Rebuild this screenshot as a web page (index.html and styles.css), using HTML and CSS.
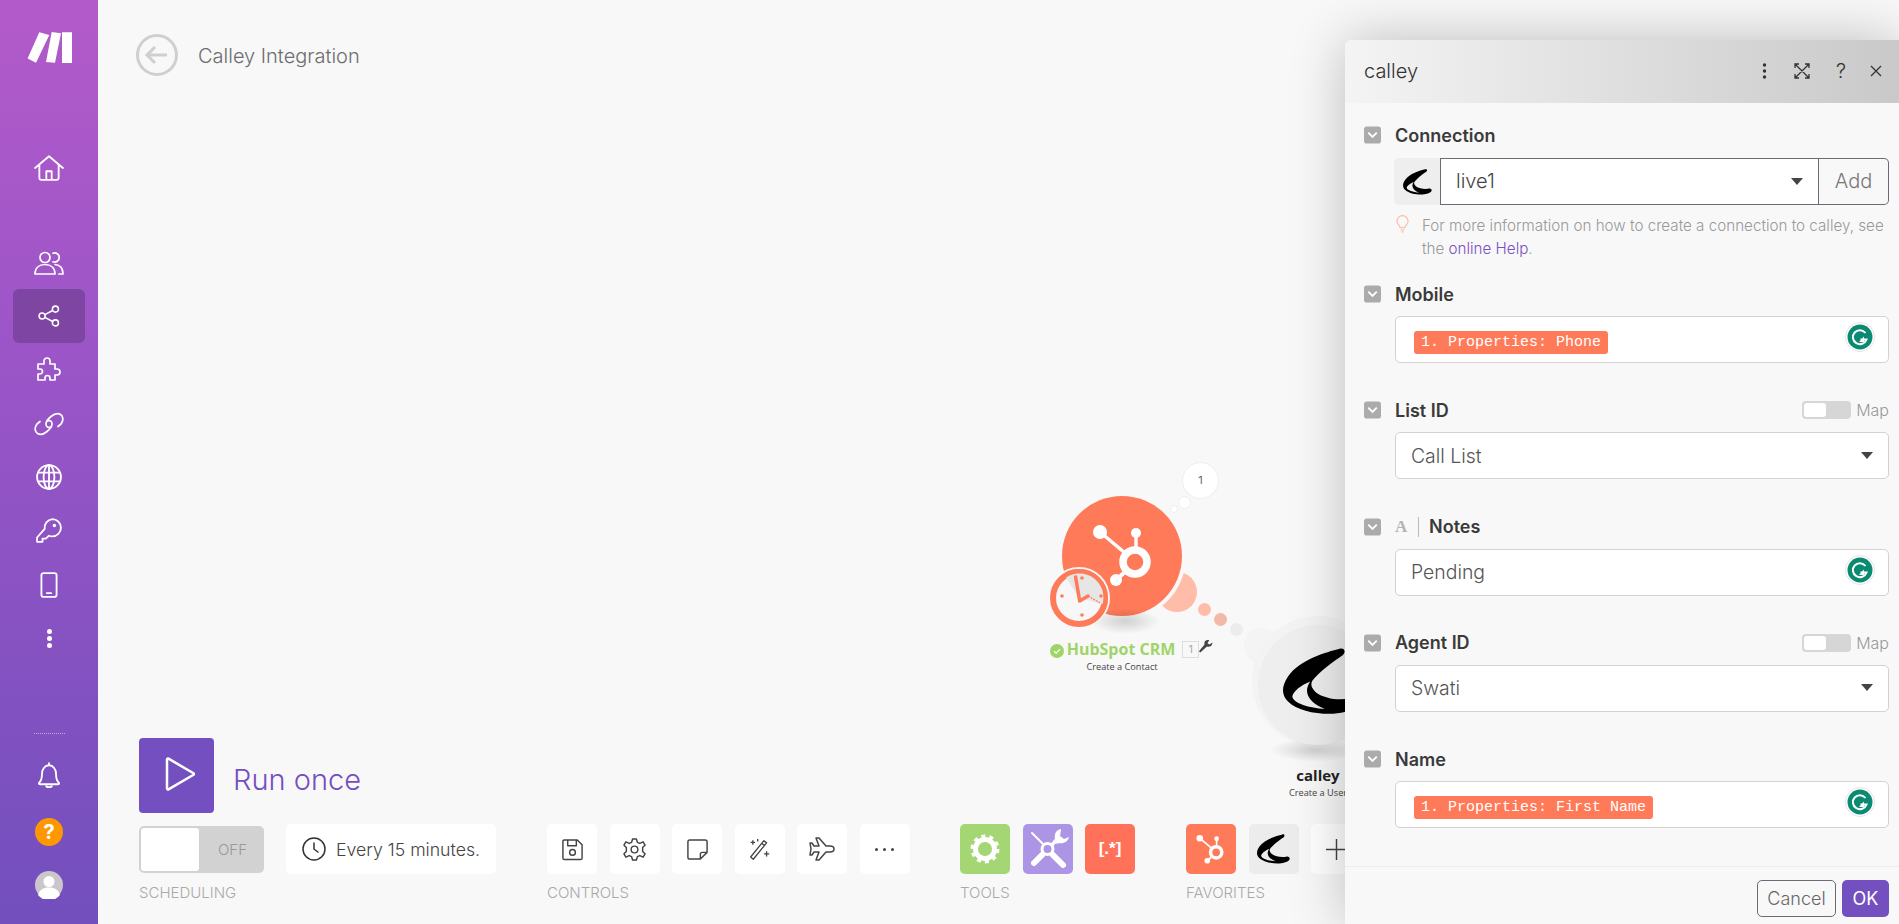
FILE: index.html
```html
<!DOCTYPE html>
<html lang="en">
  <head>
    <meta charset="UTF-8" />
    <title>Calley Integration</title>
    <link rel="stylesheet" href="styles.css">
  </head>
  <body>
    <svg class="defs">
      <defs>
        <symbol id="calley" viewBox="0 0 222 200">
          <path fill-rule="evenodd" fill="#000" d="M170 2C130 12 50 35 15 85C-5 115-5 140 15 160C40 185 90 197 140 197C170 197 205 190 218 172C224 160 215 148 202 150C170 158 125 152 98 132C85 120 82 108 88 98C110 70 150 40 178 22C190 12 185-2 170 2ZM82 100C55 110 30 130 28 145C30 165 80 180 125 182C95 172 72 150 72 128C72 118 76 108 82 100Z"/>
        </symbol>
        <symbol id="grammarly" viewBox="0 0 30 30">
          <circle cx="15" cy="15" r="14.5" fill="#fff" stroke="#e4e4e4"/>
          <circle cx="15" cy="15" r="12.5" fill="#0b8a72"/>
          <path d="M20.5 11a7 7 0 1 0 1 6.500h-6" fill="none" stroke="#fff" stroke-width="2"/>
          <path d="M19 14.500v5.500h-5z" fill="#fff"/>
        </symbol>
        <symbol id="check" viewBox="0 0 18 18">
          <rect width="18" height="18" rx="3" fill="#ababab"/>
          <path d="M4.500 6.500L9 11l4.500-4.500" fill="none" stroke="#fff" stroke-width="2"/>
        </symbol>
        <symbol id="hub" viewBox="0 0 64 64">
          <g fill="none" stroke="currentColor">
            <circle cx="43" cy="39" r="12" stroke-width="7.500"/>
            <path d="M8 9L33 30" stroke-width="3.500"/>
            <path d="M44 10V26" stroke-width="3.500"/>
            <path d="M34 48L24 57" stroke-width="4"/>
          </g>
          <g fill="currentColor">
            <circle cx="8" cy="9" r="7"/>
            <circle cx="44" cy="10" r="5"/>
            <circle cx="24" cy="57" r="6"/>
          </g>
        </symbol>
      </defs>
    </svg>

    <div class="app">
      <nav class="sidebar">
        <svg class="logo" viewBox="0 0 45 31"><path d="M.6 26.500L12.300.3 22.300 3 9 30.700zM19 30L24.700 0 34 1.300 28 30.700zM35 .3h10V31H35z" fill="#fff"/></svg>
        <a class="nav_item nav_home"><svg viewBox="0 0 28 24"><path d="M1 12L14 1l13 11M5 9v12a2 2 0 0 0 2 2h14a2 2 0 0 0 2-2V9M11.500 23v-8h5v8"/></svg></a>
        <a class="nav_item nav_first"><svg viewBox="0 0 30 24"><circle cx="11" cy="6.500" r="5"/><path d="M19 2.200a4.600 4.600 0 1 1 0 8.600M1 23c0-6 4-9.500 10-9.500S21 17 21 23zM21 13.500c5 .5 8 4 8 9.500h-4"/></svg></a>
        <a class="nav_item nav_active"><svg viewBox="0 0 24 24"><circle cx="4.500" cy="12" r="3.300"/><circle cx="19" cy="4.500" r="3.300"/><circle cx="19" cy="19.500" r="3.300"/><path d="M7.500 10.500l8.500-4.500M7.500 13.500l8.500 4.500"/></svg></a>
        <a class="nav_item"><svg viewBox="0 0 26 26"><path d="M2 7h6V4a3 3 0 0 1 6 0v3h5v5h2a3 3 0 0 1 0 6h-2v5h-5v-2a2.500 2.500 0 0 0-5 0v2H2v-6h2a2.500 2.500 0 0 0 0-5H2z"/></svg></a>
        <a class="nav_item"><svg viewBox="0 0 30 24"><path d="M13 9c3-1 5 0 5 3s-2 5-5 7.500-7 3.500-9.500 2S0 16 3 12l3-2.500"/><path d="M17 15c-3 1-5 0-5-3s2-5 5-7.500 7-3.500 9.500-2 3.500 5.500.5 9.500l-3 2.500"/></svg></a>
        <a class="nav_item"><svg viewBox="0 0 24 24"><circle cx="12" cy="12" r="11"/><ellipse cx="12" cy="12" rx="5" ry="11"/><path d="M2 8h20M2 16h20M12 1v22"/></svg></a>
        <a class="nav_item"><svg viewBox="0 0 24 24"><path d="M15 1a8 8 0 0 1 0 16c-1 0-2-.2-3-.6L9 19H6v3H1v-4l7-8A8 8 0 0 1 15 1z"/><circle cx="17" cy="7" r=".8"/></svg></a>
        <a class="nav_item"><svg viewBox="0 0 16 24"><rect x="1" y="1" width="14" height="22" rx="2"/><path d="M6 19.500h4"/></svg></a>
        <a class="nav_item nav_more"><i></i><i></i><i></i></a>
        <div class="nav_line"></div>
        <a class="nav_item nav_bell"><svg viewBox="0 0 22 24"><path d="M11 1v2M2 19c2-2 2.500-4 2.500-8S7 3 11 3s6.500 4 6.500 8 .5 6 2.500 8c.8 1 0 1.500-1 1.500H3c-1 0-1.800-.5-1-1.500zM8.500 22.500c1.500 1 3.500 1 5 0"/></svg></a>
        <div class="help_dot">?</div>
        <div class="avatar"><svg viewBox="0 0 28 28"><circle cx="14" cy="14" r="14" fill="#c9c7cc"/><circle cx="14" cy="10.500" r="5.500" fill="#fff"/><path d="M3 24c2-6 6-7.500 11-7.500S23 18 25 24a14 14 0 0 1-22 0z" fill="#fff"/></svg></div>
      </nav>

      <main class="canvas">
        <div class="top_row">
          <svg class="back" viewBox="0 0 42 42"><circle cx="21" cy="21" r="19.500"/><path d="M31 21H11M19 13l-8 8 8 8"/></svg>
          <span class="scenario_title">Calley Integration</span>
        </div>

        <div class="node node_hub">
          <div class="stub_peach"></div>
          <div class="node_circle"><svg class="hub_logo"><use href="#hub"/></svg></div>
          <div class="clock_badge">
            <svg viewBox="0 0 58 58"><circle cx="29" cy="29" r="26" fill="#f7f7f7" stroke="#ff7a59" stroke-width="6"/><path d="M29 29L16 8.500A24 24 0 0 1 52.500 35z" fill="#e6e6e6"/><path d="M29.700 32L25.600 8M29.700 32l8.300-5" fill="none" stroke="#ff7a59" stroke-width="3.500" stroke-linecap="round"/><path d="M38 27l12 7" stroke="#ff7a59" stroke-width="1.300" stroke-dasharray="2 1"/><circle cx="12" cy="27" r="1.800" fill="#ff7a59"/><circle cx="51" cy="27" r="1.800" fill="#ff7a59"/><circle cx="32" cy="46" r="1.800" fill="#ff7a59"/><circle cx="32" cy="9" r="1.800" fill="#ff7a59"/></svg>
          </div>
        </div>
        <div class="bubble bubble_count">1</div>
        <div class="bubble bubble_mid"></div>
        <div class="bubble bubble_small"></div>
        <div class="link_dot dot_a"></div>
        <div class="link_dot dot_b"></div>
        <div class="link_dot dot_c"></div>
        <div class="node_label label_hub">
          <div class="label_main">
            <span class="ok_mark"><svg viewBox="0 0 14 14"><circle cx="7" cy="7" r="7" fill="#a0d468"/><path d="M4 7.200l2.200 2 3.800-4" fill="none" stroke="#fff" stroke-width="1.200"/></svg></span>
            <span class="hub_name">HubSpot CRM</span>
            <span class="note_box">1</span>
            <svg class="wrench" viewBox="0 0 16 16"><path d="M1 14l1.500 1.500 7-6.500c2 .8 4.500.3 5.500-2 .3-.8.300-1.500.2-2.300L12.500 7 10 5.500 12 2.500C9.500 1.500 7 3 6.800 5.500c0 .5 0 1 .2 1.500z" fill="#444"/></svg>
          </div>
          <div class="label_sub">Create a Contact</div>
        </div>

        <div class="node_shadow shadow_hub"></div>
        <div class="calley_bump"></div>
        <div class="calley_halo"></div>
        <div class="node_shadow shadow_calley"></div>
        <div class="calley_circle"><svg class="calley_big"><use href="#calley"/></svg></div>
        <div class="node_label label_calley">
          <div class="calley_name">calley</div>
          <div class="label_sub">Create a User</div>
        </div>

        <div class="run_row">
          <button class="run_btn"><svg viewBox="0 0 32 36"><path d="M3 3.500v29a1 1 0 0 0 1.500.8l25-14.500a1 1 0 0 0 0-1.600L4.500 2.700A1 1 0 0 0 3 3.500z"/></svg></button>
          <span class="run_text">Run once</span>
        </div>

        <div class="toolbar">
          <section class="tool_group group_sched">
            <div class="tool_row">
              <div class="switch"><span class="switch_knob"></span><span class="switch_off">OFF</span></div>
              <div class="schedule"><svg viewBox="0 0 24 24"><circle cx="12" cy="12" r="11"/><path d="M12 5.500V12l4.500 3.500"/></svg>Every 15 minutes.</div>
            </div>
            <div class="group_name">Scheduling</div>
          </section>
          <section class="tool_group group_controls">
            <div class="tool_row tiles">
              <div class="tile"><svg viewBox="0 0 24 24"><path d="M3 2h14l5 5v14a1.500 1.500 0 0 1-1.500 1.500h-17A1.500 1.500 0 0 1 2 21V3zM7 2v6h9V2"/><circle cx="12" cy="15" r="3"/></svg></div>
              <div class="tile"><svg viewBox="0 0 24 24"><path d="M10 1h4l1 3.500 2.500 1.200L21 4l2 3.500-2.500 2.500v4l2.500 2.500L21 20l-3.500-1.700L15 19.500 14 23h-4l-1-3.500-2.500-1.200L3 20l-2-3.500L3.500 14v-4L1 7.500 3 4l3.500 1.700L9 4.500z"/><circle cx="12" cy="12" r="3.500"/></svg></div>
              <div class="tile"><svg viewBox="0 0 24 24"><path d="M4 2h16a2 2 0 0 1 2 2v11l-7 7H4a2 2 0 0 1-2-2V4a2 2 0 0 1 2-2zM22 15h-5a2 2 0 0 0-2 2v5"/></svg></div>
              <div class="tile"><svg viewBox="0 0 26 26"><path d="M18 3l3 2.500L6 24l-3-2.500zM15.500 6l3 2.500M3 5h5M5.500 2.500v5M11 1v3M18 18h6M21 15v6"/></svg></div>
              <div class="tile tile_plane"><svg viewBox="0 0 26 24"><path d="M25 12c0-2-2-3-4-3h-4L10 1H7l3 8H5L3 6H1l1 6-1 6h2l2-3h5l-3 8h3l7-8h4c2 0 4-1 4-3z"/></svg></div>
              <div class="tile tile_dots"><i></i><i></i><i></i></div>
            </div>
            <div class="group_name">Controls</div>
          </section>
          <section class="tool_group group_tools">
            <div class="tool_row tiles">
              <div class="tile tile_green"><svg viewBox="0 0 30 30"><circle cx="15" cy="15" r="12.500" fill="none" stroke="#fff" stroke-width="4" stroke-dasharray="3.930 3.920"/><circle cx="15" cy="15" r="9.500" fill="none" stroke="#fff" stroke-width="5"/></svg></div>
              <div class="tile tile_violet"><svg viewBox="0 0 50 50"><g fill="none" stroke="#fff" stroke-linecap="round"><circle cx="24.500" cy="25" r="5.500" stroke-width="3"/><path d="M9 9l11 11" stroke-width="2"/><path d="M30 31l10 10" stroke-width="6"/><path d="M11 39l8-8" stroke-width="6"/><path d="M29 21l6-7" stroke-width="3.500"/></g><path d="M38 5c-5 1-7 5-6 10l-1 2 3 3 2-1c4 1 9-1 10-6l-5 2-4-3 1-6z" fill="#fff"/></svg></div>
              <div class="tile tile_coral"><span class="regex">[.*]</span></div>
            </div>
            <div class="group_name">Tools</div>
          </section>
          <section class="tool_group group_favs">
            <div class="tool_row tiles">
              <div class="tile tile_hub"><svg><use href="#hub"/></svg></div>
              <div class="tile tile_calley"><svg><use href="#calley"/></svg></div>
              <div class="tile tile_plus"><svg viewBox="0 0 24 24"><path d="M12 1v22M1 12h22"/></svg></div>
            </div>
            <div class="group_name">Favorites</div>
          </section>
        </div>
      </main>

      <aside class="panel">
        <header class="panel_head">
          <span class="panel_title">calley</span>
          <div class="panel_tools">
            <svg class="tool_more" viewBox="0 0 4 16"><circle cx="2" cy="2" r="1.700"/><circle cx="2" cy="8" r="1.700"/><circle cx="2" cy="14" r="1.700"/></svg>
            <svg class="tool_line tool_expand" viewBox="0 0 16 16"><path d="M1 5V1h4M11 1h4v4M15 11v4h-4M5 15H1v-4M1 1l14 14M15 1L1 15"/></svg>
            <span class="tool_help">?</span>
            <svg class="tool_line tool_close" viewBox="0 0 12 12"><path d="M1 1l10 10M11 1L1 11"/></svg>
          </div>
        </header>

        <div class="panel_body">
          <div class="field field_conn">
            <div class="field_head"><svg class="check"><use href="#check"/></svg><label>Connection</label></div>
            <div class="conn_row">
              <div class="conn_icon"><svg><use href="#calley"/></svg></div>
              <div class="conn_select">live1<span class="caret"></span></div>
              <div class="conn_add">Add</div>
            </div>
            <div class="hint">
              <svg viewBox="0 0 14 18"><path d="M4.500 13C4 10.500 1 9.500 1 6a6 6 0 0 1 12 0c0 3.500-3 4.500-3.500 7zM5 15.500h4M6 17.500h2"/></svg>
              <p>For more information on how to create a connection to calley, see the <a>online Help</a>.</p>
            </div>
          </div>

          <div class="field">
            <div class="field_head"><svg class="check"><use href="#check"/></svg><label>Mobile</label></div>
            <div class="input"><span class="tag">1. Properties: Phone</span><svg class="gram"><use href="#grammarly"/></svg></div>
          </div>

          <div class="field">
            <div class="field_head"><svg class="check"><use href="#check"/></svg><label>List ID</label>
              <div class="map"><span class="map_switch"><i></i></span>Map</div></div>
            <div class="input">Call List<span class="caret"></span></div>
          </div>

          <div class="field">
            <div class="field_head"><svg class="check"><use href="#check"/></svg><span class="type_a">A</span><label>Notes</label></div>
            <div class="input">Pending<svg class="gram"><use href="#grammarly"/></svg></div>
          </div>

          <div class="field">
            <div class="field_head"><svg class="check"><use href="#check"/></svg><label>Agent ID</label>
              <div class="map"><span class="map_switch"><i></i></span>Map</div></div>
            <div class="input">Swati<span class="caret"></span></div>
          </div>

          <div class="field">
            <div class="field_head"><svg class="check"><use href="#check"/></svg><label>Name</label></div>
            <div class="input"><span class="tag">1. Properties: First Name</span><svg class="gram"><use href="#grammarly"/></svg></div>
          </div>
        </div>

        <footer class="panel_foot">
          <button class="btn_cancel">Cancel</button>
          <button class="btn_ok">OK</button>
        </footer>
      </aside>
    </div>
  </body>
</html>
```

FILE: styles.css
```css
* {
  box-sizing: border-box;
}

html,
body {
  margin: 0;
  height: 100%;
  overflow: hidden;
}

body {
  background-color: #f8f8f8;
  color: #444;
  font-family: Inter, "Liberation Sans", sans-serif;
}

.defs {
  display: none;
}

.app {
  display: flex;
  height: 924px;
  position: relative;
  overflow: hidden;
}

/* sidebar */

.sidebar {
  display: flex;
  flex-direction: column;
  align-items: center;
  flex: 0 0 98px;
  padding-top: 32px;
  background: linear-gradient(180deg, #b35aca 0%, #9a55c7 40%, #724fbd 100%);
}

.logo {
  width: 45px;
  height: 31px;
}

.nav_item {
  display: flex;
  align-items: center;
  justify-content: center;
  flex: 0 0 53.7px;
  width: 72px;
  border-radius: 6px;
}

.nav_item svg {
  width: 30px;
  height: 26px;
  fill: none;
  stroke: #fff;
  stroke-width: 1.7;
  stroke-linejoin: round;
  stroke-linecap: round;
}

.nav_home {
  margin-top: 78px;
}

.nav_first {
  margin-top: 41px;
}

.nav_active {
  background-color: #7e45a3;
}

.nav_active svg {
  height: 22px;
}

.nav_more {
  flex-direction: column;
  gap: 2px;
}

.nav_more i {
  width: 5px;
  height: 5px;
  border-radius: 50%;
  background-color: #fff;
}

.nav_line {
  width: 31px;
  margin-top: 68px;
  border-top: 1px dotted #c9a5e6;
}

.nav_bell {
  margin-top: 14px;
}

.help_dot {
  width: 28px;
  height: 28px;
  margin-top: 16px;
  border-radius: 50%;
  background-color: #ff9800;
  color: #fff;
  font-size: 20px;
  font-weight: 700;
  line-height: 28px;
  text-align: center;
}

.avatar {
  width: 28px;
  height: 28px;
  margin-top: 25px;
}

.avatar svg {
  display: block;
}

/* canvas */

.canvas {
  display: flex;
  flex-direction: column;
  flex: 1;
  padding: 34px 0 0 41px;
}

.top_row {
  display: flex;
  align-items: center;
  gap: 20px;
  margin-left: -3px;
}

.back {
  width: 42px;
  height: 42px;
  fill: none;
  stroke: #cfcfcf;
  stroke-width: 3;
}

.scenario_title {
  color: #6d6d6d;
  font-size: 20px;
  font-weight: 300;
  padding-top: 2px;
}

.node,
.bubble,
.link_dot,
.node_label,
.node_shadow,
.calley_bump,
.calley_halo,
.calley_circle {
  position: absolute;
}

.node_hub {
  left: 1062px;
  top: 496px;
}

.node_circle {
  position: relative;
  width: 120px;
  height: 120px;
  border-radius: 50%;
  background-color: #ff7a59;
  box-shadow: 0 0 0 4px #f8f8f8;
}

.hub_logo {
  position: absolute;
  left: 30px;
  top: 27px;
  width: 64px;
  height: 64px;
  color: #fff;
}

.stub_peach {
  position: absolute;
  left: 95px;
  top: 76px;
  width: 40px;
  height: 40px;
  border-radius: 50%;
  background-color: #ffbca8;
}

.clock_badge {
  position: absolute;
  left: -12px;
  top: 73px;
  width: 58px;
  height: 58px;
  border-radius: 50%;
  box-shadow: 0 0 0 2px #f8f8f8;
}

.clock_badge svg {
  display: block;
}

.bubble {
  border-radius: 50%;
  background-color: #fff;
  border: 1px solid #eee;
}

.bubble_count {
  left: 1182px;
  top: 462px;
  width: 37px;
  height: 37px;
  color: #666;
  font-size: 11px;
  line-height: 35px;
  text-align: center;
}

.bubble_mid {
  left: 1178px;
  top: 496px;
  width: 13px;
  height: 13px;
}

.bubble_small {
  left: 1170px;
  top: 505px;
  width: 8px;
  height: 8px;
}

.link_dot {
  width: 13px;
  height: 13px;
  border-radius: 50%;
}

.dot_a {
  left: 1198px;
  top: 603px;
  background-color: #ffbca8;
}

.dot_b {
  left: 1214px;
  top: 613px;
  background-color: #f4b8a6;
}

.dot_c {
  left: 1230px;
  top: 623px;
  background-color: #ececec;
}

.node_label {
  text-align: center;
}

.label_hub {
  left: 1017px;
  top: 638px;
  width: 210px;
}

.label_main {
  display: flex;
  align-items: center;
  justify-content: center;
  height: 22px;
  padding-left: 19px;
  white-space: nowrap;
}

.ok_mark svg {
  display: block;
  width: 14px;
  height: 14px;
  margin: 3px 3px 0 0;
}

.hub_name {
  color: #a0d468;
  font-family: "Open Sans", sans-serif;
  font-size: 16px;
  font-weight: 700;
}

.note_box {
  flex: 0 0 17px;
  height: 17px;
  margin-left: 7px;
  border: 1px solid #ddd;
  color: #aaa;
  font-size: 11px;
  line-height: 15px;
}

.wrench {
  flex: 0 0 15px;
  height: 15px;
  margin: -8px 0 0 -1px;
}

.label_sub {
  color: #444;
  font-family: "Open Sans", sans-serif;
  font-size: 9.2px;
  line-height: 14px;
}

.label_calley {
  left: 1268px;
  top: 765px;
  width: 100px;
}

.calley_name {
  color: #222;
  font-family: "Open Sans", sans-serif;
  font-size: 15px;
  font-weight: 700;
  line-height: 21px;
}

.node_shadow {
  border-radius: 50%;
  background: radial-gradient(closest-side, rgba(0, 0, 0, 0.16), rgba(0, 0, 0, 0));
}

.shadow_hub {
  left: 1090px;
  top: 608px;
  width: 70px;
  height: 26px;
}

.shadow_calley {
  left: 1270px;
  top: 738px;
  width: 90px;
  height: 24px;
}

.calley_bump {
  left: 1244px;
  top: 628px;
  width: 36px;
  height: 36px;
  border-radius: 50%;
  background-color: #f4f4f4;
}

.calley_halo {
  left: 1252px;
  top: 616px;
  width: 130px;
  height: 130px;
  border-radius: 50%;
  background-color: #f3f3f3;
}

.calley_circle {
  left: 1258px;
  top: 625px;
  width: 120px;
  height: 120px;
  border-radius: 50%;
  background-color: #eee;
}

.calley_big {
  position: absolute;
  left: 25px;
  top: 23px;
  width: 74px;
  height: 67px;
}

/* run once and toolbar */

.run_row {
  display: flex;
  align-items: flex-end;
  gap: 19px;
  margin-top: auto;
}

.run_btn {
  width: 75px;
  height: 75px;
  padding: 0;
  border: none;
  border-radius: 4px;
  background-color: #744fc0;
}

.run_btn svg {
  width: 32px;
  height: 36px;
  margin-left: 6px;
  fill: none;
  stroke: #fff;
  stroke-width: 2.5;
}

.run_text {
  margin-bottom: 16px;
  color: #744fc0;
  font-size: 29px;
  font-weight: 300;
}

.toolbar {
  display: flex;
  margin-top: 11px;
  padding-bottom: 22px;
}

.tool_row {
  display: flex;
  align-items: center;
  height: 50px;
}

.group_name {
  margin-top: 10px;
  color: #a9a9a9;
  font-size: 15px;
  font-weight: 300;
  text-transform: uppercase;
  line-height: 18px;
}

.group_sched {
  width: 408px;
}

.group_controls {
  width: 413px;
}

.group_tools {
  width: 226px;
}

.switch {
  display: flex;
  align-items: center;
  width: 125px;
  height: 47px;
  padding: 2px;
  border-radius: 5px;
  background-color: #d2d2d2;
}

.switch_knob {
  width: 58px;
  height: 43px;
  border-radius: 3px;
  background-color: #fff;
}

.switch_off {
  flex: 1;
  color: #989898;
  font-size: 15px;
  font-weight: 300;
  text-align: center;
  padding-left: 4px;
}

.schedule {
  display: flex;
  align-items: center;
  gap: 10px;
  width: 210px;
  height: 50px;
  margin-left: 22px;
  padding-left: 16px;
  border-radius: 5px;
  background-color: #fff;
  color: #444;
  font-size: 17.7px;
  font-weight: 300;
  white-space: nowrap;
}

.schedule svg {
  width: 24px;
  height: 24px;
  fill: none;
  stroke: #333;
  stroke-width: 1.5;
}

.tiles {
  gap: 12.5px;
}

.tile {
  display: flex;
  align-items: center;
  justify-content: center;
  flex: 0 0 50px;
  height: 50px;
  border-radius: 5px;
  background-color: #fff;
}

.tile svg {
  width: 23px;
  height: 23px;
  fill: none;
  stroke: #444;
  stroke-width: 1.5;
  stroke-linejoin: round;
}

.tile_plane svg {
  width: 26px;
  height: 24px;
}

.tile_dots {
  gap: 5px;
}

.tile_dots i {
  width: 3px;
  height: 3px;
  border-radius: 50%;
  background-color: #444;
}

.tile_green {
  background-color: #a4d673;
}

.tile_violet {
  background-color: #ad95e6;
}

.tile_coral {
  background-color: #ff7259;
}

.tile_hub {
  background-color: #ff7a59;
  color: #fff;
}

.tile_calley {
  background-color: #ececec;
}

.tile_green svg,
.tile_violet svg,
.tile_hub svg,
.tile_calley svg {
  stroke: none;
}

.tile_green svg,
.tile_hub svg {
  width: 30px;
  height: 30px;
}

.tile_violet svg {
  width: 50px;
  height: 50px;
}

.tile_calley svg {
  width: 33px;
  height: 30px;
}

.regex {
  color: #fff;
  font-family: "Liberation Sans", sans-serif;
  font-size: 17px;
  font-weight: 700;
}

/* panel */

.panel {
  position: absolute;
  left: 1345px;
  top: 40px;
  right: 0;
  bottom: 0;
  display: flex;
  flex-direction: column;
  border-top-left-radius: 6px;
  background-color: #f8f8f8;
  box-shadow: 0 0 55px rgba(0, 0, 0, 0.24);
}

.panel_head {
  display: flex;
  align-items: center;
  justify-content: space-between;
  flex: 0 0 63px;
  padding: 0 17px 2px 19px;
  border-top-left-radius: 6px;
  background: linear-gradient(90deg, #f4f4f4, #c9c9c9);
}

.panel_title {
  color: #333;
  font-size: 20px;
  font-weight: 300;
}

.panel_tools {
  display: flex;
  align-items: center;
}

.panel_tools svg {
  display: block;
}

.tool_more {
  width: 5px;
  height: 16px;
  fill: #333;
  margin-right: 27px;
}

.tool_line {
  fill: none;
  stroke: #333;
  stroke-width: 1.3;
}

.tool_expand {
  width: 16px;
  height: 16px;
  margin-right: 26px;
}

.tool_help {
  width: 12px;
  margin-right: 22px;
  color: #333;
  font-size: 20px;
  font-weight: 300;
}

.tool_close {
  width: 12px;
  height: 12px;
}

.panel_body {
  flex: 1;
  padding: 23px 10px 0 19px;
}

.field {
  margin-bottom: 38.25px;
}

.field_conn {
  margin-bottom: 25px;
}

.field_conn .field_head {
  margin-bottom: 14px;
}

.field_head {
  display: flex;
  align-items: center;
  height: 18px;
  margin-bottom: 13px;
}

.check {
  flex: 0 0 17px;
  width: 17px;
  height: 18px;
  margin-right: 14px;
}

label {
  color: #3a3a3a;
  font-size: 18px;
  font-weight: 600;
}

.type_a {
  width: 24px;
  margin-right: 10px;
  border-right: 1px solid #bbb;
  color: #b3b3b3;
  font-family: "Liberation Serif", serif;
  font-size: 17px;
  font-weight: 700;
  line-height: 20px;
}

.map {
  display: flex;
  align-items: center;
  gap: 5px;
  margin-left: auto;
  color: #999;
  font-size: 16px;
  font-weight: 300;
}

.map_switch {
  display: block;
  width: 49px;
  height: 18px;
  padding: 2px;
  border-radius: 4px;
  background-color: #d6d6d6;
}

.map_switch i {
  display: block;
  width: 22px;
  height: 14px;
  border-radius: 3px;
  background-color: #fff;
}

.conn_row {
  display: flex;
  height: 47px;
  margin-left: 30px;
}

.conn_icon {
  display: flex;
  align-items: center;
  justify-content: center;
  flex: 0 0 46px;
  border-radius: 5px 0 0 5px;
  background-color: #eee;
}

.conn_icon svg {
  width: 29px;
  height: 26px;
}

.conn_select {
  position: relative;
  flex: 0 0 379px;
  padding-left: 15px;
  border: 1px solid #6b6b75;
  background-color: #fff;
  color: #444;
  font-size: 20px;
  font-weight: 300;
  line-height: 45px;
}

.conn_add {
  flex: 1;
  border: 1px solid #6b6b75;
  border-left: none;
  border-radius: 0 5px 5px 0;
  color: #777;
  font-size: 20px;
  font-weight: 300;
  line-height: 45px;
  text-align: center;
}

.caret {
  position: absolute;
  right: 15px;
  top: 50%;
  margin-top: -4px;
  border-style: solid;
  border-width: 7px 6px 0;
  border-color: #444 transparent transparent;
}

.hint {
  display: flex;
  gap: 13px;
  margin: 9px 0 0 32px;
}

.hint svg {
  flex: 0 0 13px;
  width: 13px;
  height: 18px;
  margin-top: 1px;
  fill: none;
  stroke: #f6b9a4;
  stroke-width: 1.2;
}

.hint p {
  margin: 0;
  color: #999;
  font-size: 15.2px;
  font-weight: 300;
  line-height: 23px;
}

.hint a {
  color: #7a4ec4;
}

.input {
  position: relative;
  display: flex;
  align-items: center;
  height: 47px;
  margin-left: 31px;
  padding-left: 15px;
  border: 1px solid #d2d2d2;
  border-radius: 5px;
  background-color: #fff;
  color: #555;
  font-size: 19.4px;
  font-weight: 300;
}

.tag {
  margin: 6px 0 0 3px;
  padding: 0 7px;
  border-radius: 3px;
  background-color: #ff7a59;
  color: #fff;
  font-family: "Liberation Mono", monospace;
  font-size: 15px;
  line-height: 23px;
}

.gram {
  position: absolute;
  right: 13px;
  top: 5px;
  width: 30px;
  height: 30px;
}

.panel_foot {
  display: flex;
  justify-content: flex-end;
  gap: 6px;
  flex: 0 0 63px;
  padding: 13px 10px 0 0;
  border-top: 1px solid #ececec;
}

.panel_foot button {
  height: 37px;
  border-radius: 5px;
  font-family: Inter, "Liberation Sans", sans-serif;
  font-size: 18px;
}

.btn_cancel {
  width: 79px;
  border: 1px solid #6b6b75;
  background: transparent;
  color: #666;
  font-weight: 300;
}

.btn_ok {
  width: 47px;
  border: none;
  background-color: #744fc0;
  color: #fff;
}
```
